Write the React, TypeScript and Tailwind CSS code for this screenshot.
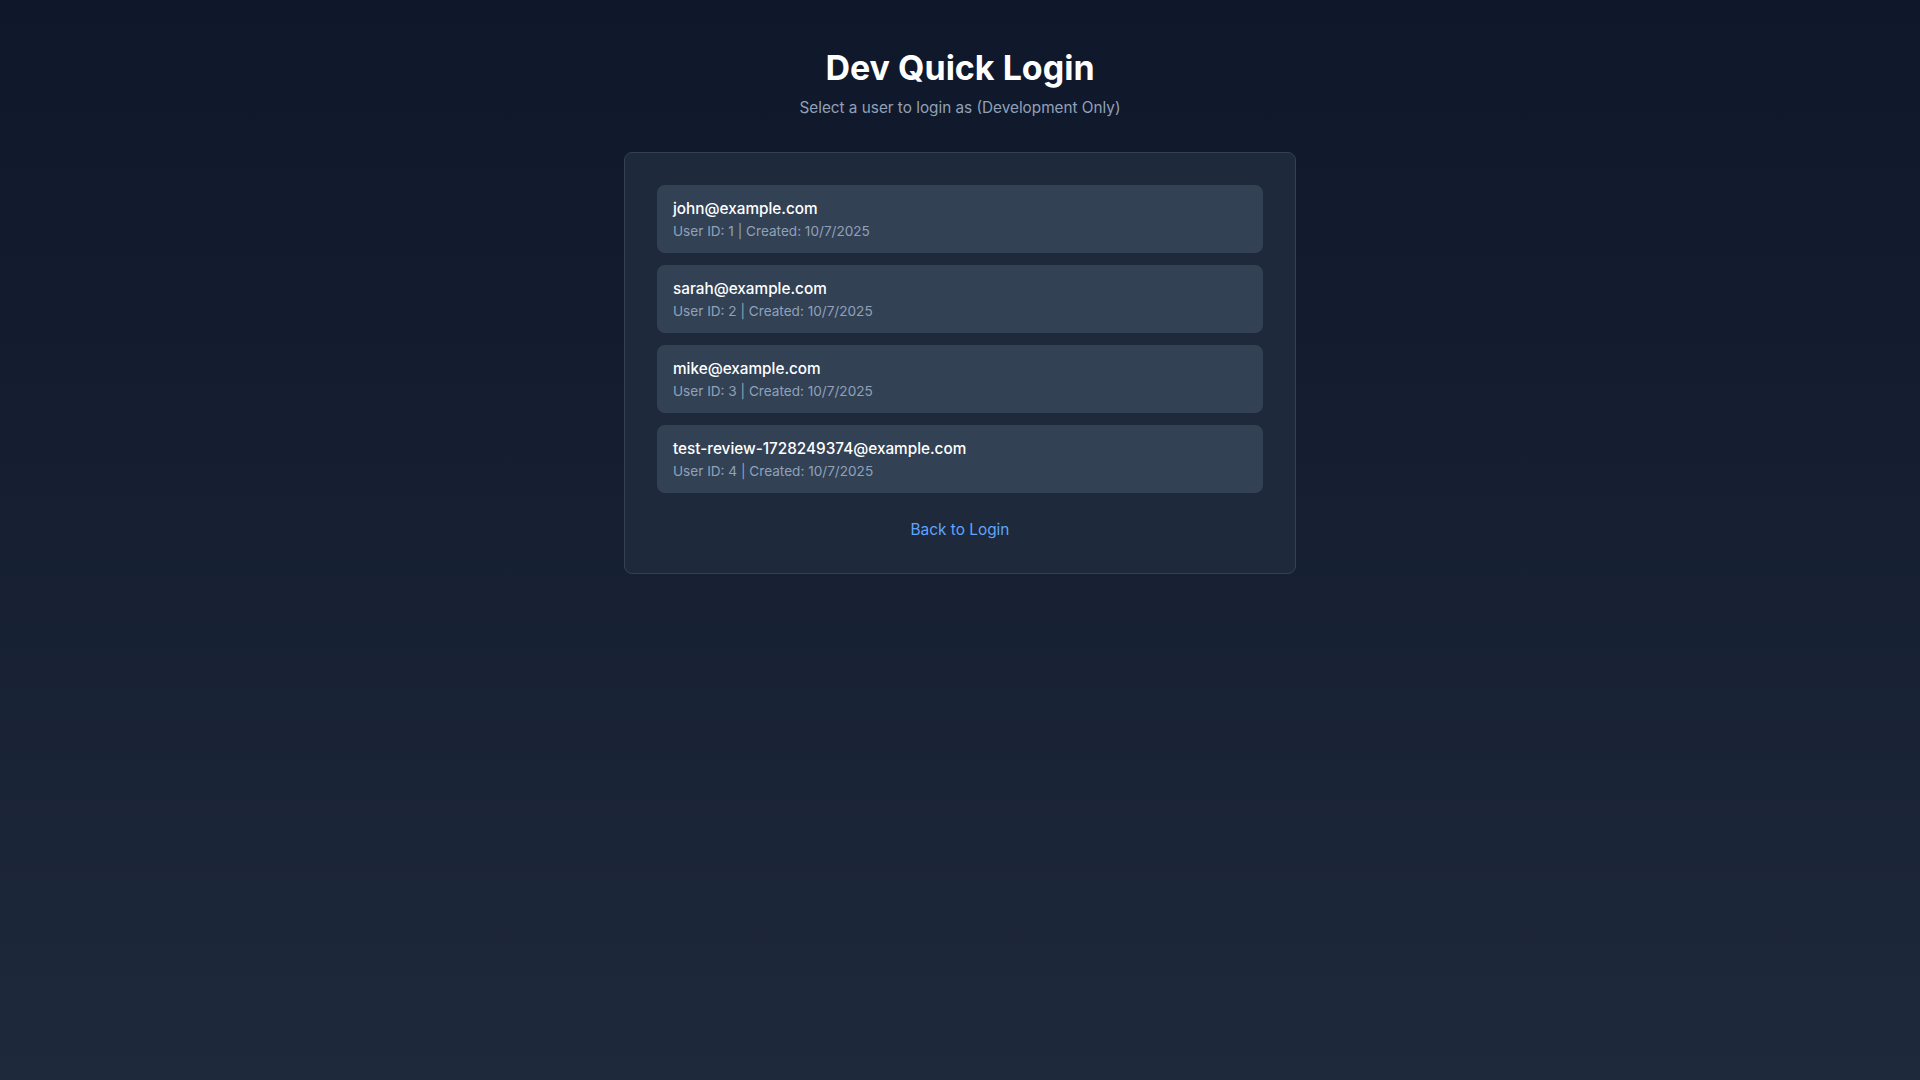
import React from "react";

const users = [
  { id: 1, email: "john@example.com" },
  { id: 2, email: "sarah@example.com" },
  { id: 3, email: "mike@example.com" },
  { id: 4, email: "test-review-1728249374@example.com" },
];

export default function App() {
  return (
    <div
      className="min-h-screen bg-gradient-to-b from-[#0f172a] to-[#1e293b] pt-12 px-4"
      style={{ fontFamily: "Inter, 'Noto Sans', sans-serif" }}
    >
      <div className="text-center mb-8">
        <h1 className="text-[34px] leading-10 font-bold text-white">Dev Quick Login</h1>
        <p className="mt-2 text-[15.3px] leading-6 text-slate-400">Select a user to login as (Development Only)</p>
      </div>
      <div className="max-w-2xl mx-auto bg-[#1e293b] border border-[#334155] rounded-lg p-8">
        <div className="flex flex-col gap-3">
          {users.map((u) => (
            <button
              key={u.id}
              className="w-full text-left bg-[#334155] rounded-lg px-4 py-3"
            >
              <div className="text-[15.3px] font-medium text-white leading-6">{u.email}</div>
              <div className="text-[13.6px] text-slate-400 leading-5">
                User ID: {u.id} | Created: 10/7/2025
              </div>
            </button>
          ))}
        </div>
        <div className="mt-6 text-center">
          <a className="text-[15.4px] leading-5 text-[#60a5fa]">Back to Login</a>
        </div>
      </div>
    </div>
  );
}
